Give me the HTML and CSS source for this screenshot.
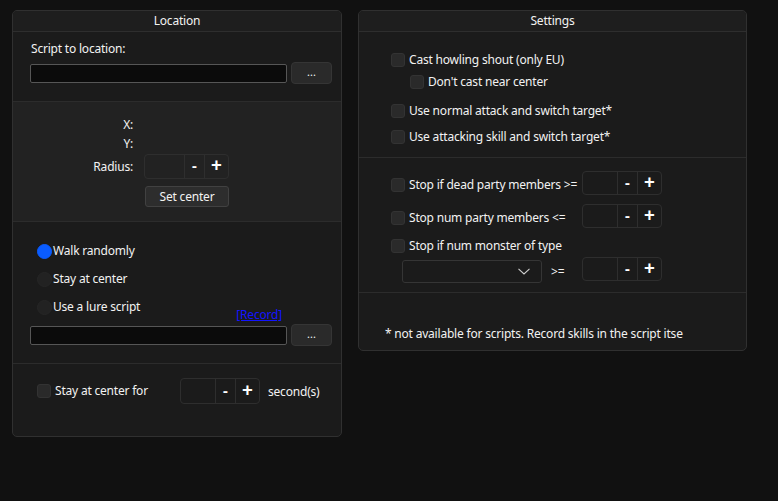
FILE: index.html
```html
<!DOCTYPE html>
<html>
<head>
<meta charset="utf-8">
<link rel="stylesheet" href="styles.css">
</head>
<body>
<div class="app">
  <section class="panel loc">
    <div class="ph">Location</div>
    <div class="sec l1">
      <div class="lbl">Script to location:</div>
      <div class="filerow"><div class="input"></div><button class="dots">...</button></div>
    </div>
    <div class="sec l2">
      <div class="grid">
        <span class="k">X:</span><span class="v"></span>
        <span class="k">Y:</span><span class="v"></span>
        <span class="k">Radius:</span>
        <div class="spin sp40"><span class="field"></span><span class="sb minus">-</span><span class="sb plus">+</span></div>
        <span></span><button class="btn">Set center</button>
      </div>
    </div>
    <div class="sec l3">
      <div class="radio on"><span class="dot"></span>Walk randomly</div>
      <div class="radio"><span class="dot"></span>Stay at center</div>
      <div class="radio"><span class="dot"></span>Use a lure script</div>
      <div class="recrow"><a class="rec" href="#">[Record]</a></div>
      <div class="filerow"><div class="input"></div><button class="dots">...</button></div>
    </div>
    <div class="sec l4">
      <div class="cbx stayfor"><span class="box"></span>Stay at center for</div>
      <div class="spin sp35"><span class="field"></span><span class="sb minus">-</span><span class="sb plus">+</span></div>
      <span class="unit">second(s)</span>
    </div>
  </section>

  <section class="panel set">
    <div class="ph">Settings</div>
    <div class="sec r1">
      <div class="cbx c1"><span class="box"></span>Cast howling shout (only EU)</div>
      <div class="cbx c2 sub"><span class="box"></span>Don't cast near center</div>
      <div class="cbx c3"><span class="box"></span>Use normal attack and switch target*</div>
      <div class="cbx c4"><span class="box"></span>Use attacking skill and switch target*</div>
    </div>
    <div class="sec r2">
      <div class="srow s1">
        <div class="cbx wide"><span class="box"></span>Stop if dead party members &gt;=</div>
        <div class="spin sp35"><span class="field"></span><span class="sb minus">-</span><span class="sb plus">+</span></div>
      </div>
      <div class="srow s2">
        <div class="cbx wide"><span class="box"></span>Stop num party members &lt;=</div>
        <div class="spin sp35"><span class="field"></span><span class="sb minus">-</span><span class="sb plus">+</span></div>
      </div>
      <div class="cbx s3"><span class="box"></span>Stop if num monster of type</div>
      <div class="srow s4">
        <div class="combo"><svg class="chev" width="12" height="7" viewBox="0 0 12 7"><path d="M0.5 0.8 L6 6 L11.5 0.8" fill="none" stroke="#cfcfcf" stroke-width="1.1"/></svg></div>
        <span class="ge">&gt;=</span>
        <div class="spin sp35"><span class="field"></span><span class="sb minus">-</span><span class="sb plus">+</span></div>
      </div>
    </div>
    <div class="sec r3">
      <div class="note">* not available for scripts. Record skills in the script itse</div>
    </div>
  </section>
</div>
</body>
</html>
```
FILE: styles.css
```css
* { box-sizing: border-box; }
html, body { margin: 0; padding: 0; }
body {
  background: #111111;
  width: 778px;
  height: 501px;
  overflow: hidden;
  font-family: "Noto Sans", "Open Sans", sans-serif;
  font-size: 12px;
  letter-spacing: -0.2px;
  color: #f2f2f2;
}
.app {
  display: flex;
  align-items: flex-start;
  gap: 16px;
  padding: 10px 0 0 12px;
}
.panel {
  background: #1b1b1b;
  border: 1px solid #303030;
  border-radius: 5px;
  display: flex;
  flex-direction: column;
  overflow: hidden;
}
.loc { width: 330px; height: 427px; }
.set { width: 389px; height: 341px; }
.ph {
  height: 21px;
  line-height: 19px;
  text-align: center;
  border-bottom: 1px solid #2e2e2e;
  background: #1e1e1e;
}
.sec { border-top: 1px solid #2c2c2c; }
.ph + .sec { border-top: none; }

/* left */
.l1 { height: 69px; padding: 9px 9px 0 17px; }
.lbl { line-height: 16px; padding-left: 1px; }
.filerow { display: flex; align-items: center; gap: 4px; margin-top: 5px; }
.input {
  width: 257px; height: 19px;
  background: #0b0b0b;
  border: 1px solid #565656;
  border-radius: 2px;
}
.dots {
  width: 41px; height: 22px;
  background: #2a2a2a;
  border: 1px solid #353535;
  border-radius: 4px;
  color: #f2f2f2;
  font-family: inherit;
  font-size: 11px;
  padding: 0 0 3px;
  line-height: 12px;
}
.l2 { height: 120px; background: #222222; padding-top: 15px; }
.grid {
  display: grid;
  grid-template-columns: 120px auto;
  column-gap: 11px;
  align-items: center;
  justify-content: start;
}
.k { text-align: right; line-height: 16px; }
.v { height: 16px; }
.grid > :nth-child(3), .grid > :nth-child(4) { margin-top: 3px; }
.grid > :nth-child(5), .grid > :nth-child(6) { margin-top: 2px; }
.grid > :nth-child(7), .grid > :nth-child(8) { margin-top: 7px; }
.btn {
  width: 84px; height: 21px;
  margin-left: 1px;
  background: #2d2d2d;
  border: 1px solid #414141;
  border-radius: 3px;
  color: #f2f2f2;
  font-family: inherit;
  font-size: 12px;
  letter-spacing: -0.2px;
  padding: 0 0 1px;
}
.spin {
  display: flex;
  height: 25px;
  border: 1px solid #2e2e2e;
  border-radius: 4px;
}
.spin .field { width: 40px; border-right: 1px solid #2e2e2e; }
.sp35 .field { width: 35px; }
.spin .sb {
  display: flex; align-items: center; justify-content: center;
  font-weight: bold; color: #fff; letter-spacing: 0;
}
.spin .minus { width: 20px; border-right: 1px solid #2e2e2e; font-size: 15px; padding-bottom: 3px; }
.spin .plus { width: 23px; font-size: 19px; padding-bottom: 3px; }

.l3 { height: 142px; padding: 21px 9px 0 17px; }
.radio {
  display: flex; align-items: center;
  height: 16px; line-height: 16px;
  padding-left: 7px;
  margin-bottom: 12px;
}
.radio .dot {
  width: 15px; height: 15px; border-radius: 50%;
  background: #222222;
  border: 1px solid #262626;
  margin-right: 1px;
}
.radio.on .dot { background: #0a5cff; border-color: #0a5cff; }
.recrow {
  display: flex; justify-content: flex-end;
  padding-right: 50px;
  margin-top: -19px;
  height: 16px; line-height: 14px;
}
.rec { color: #1414ff; text-decoration: underline; text-underline-offset: 1px; font-size: 12px; }
.l3 .filerow { margin-top: 0; }

.l4 { flex: 1; display: flex; align-items: center; padding: 0 0 18px 24px; }
.l4 .spin { height: 26px; }
.stayfor { width: 143px; }
.unit { margin-left: 8px; }

.cbx { display: flex; align-items: center; height: 16px; line-height: 16px; }
.cbx .box {
  width: 14px; height: 14px;
  background: #2a2a2a;
  border: 1px solid #333333;
  border-radius: 3px;
  margin-right: 4px;
  flex: none;
}

/* right */
.r1 { height: 125px; padding: 20px 0 0 32px; }
.c2 { margin-top: 6px; padding-left: 19px; }
.c3 { margin-top: 13px; }
.c4 { margin-top: 10px; }
.r2 { height: 135px; padding: 13px 0 0 32px; }
.srow { display: flex; align-items: center; }
.srow .spin { height: 24px; }
.wide { width: 191px; margin-top: 4px; white-space: nowrap; }
.s2 { margin-top: 9px; }
.s3 { margin-top: 10px; }
.s4 { margin-top: 3px; align-items: flex-start; padding-left: 11px; }
.combo {
  width: 140px; height: 23px; margin-top: 3px;
  border: 1px solid #353535;
  border-radius: 3px;
  background: #1b1b1b;
  display: flex; align-items: center; justify-content: flex-end;
  padding-right: 11px;
}
.ge { width: 40px; padding-left: 9px; margin-top: 7px; line-height: 16px; }
.r3 { flex: 1; padding: 33px 0 0 26px; }
.note { line-height: 16px; white-space: nowrap; }
```
